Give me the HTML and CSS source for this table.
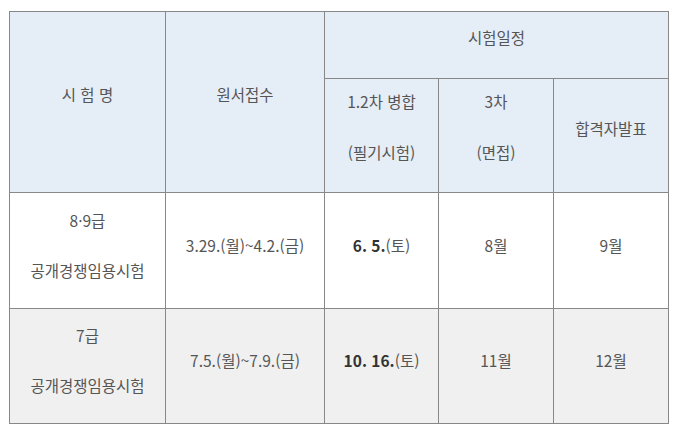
FILE: index.html
```html
<!DOCTYPE html>
<html lang="ko">
<head>
<meta charset="utf-8">
<link rel="stylesheet" href="styles.css">
</head>
<body>
<table class="sched">
  <colgroup>
    <col class="c1"><col class="c2"><col class="c3"><col class="c4"><col class="c5">
  </colgroup>
  <tr class="h1">
    <th rowspan="2" class="one">시 험 명</th>
    <th rowspan="2" class="one">원서접수</th>
    <th colspan="3" class="one">시험일정</th>
  </tr>
  <tr class="h2">
    <th class="two"><p>1.2차 병합</p><p>(필기시험)</p></th>
    <th class="two"><p>3차</p><p>(면접)</p></th>
    <th class="one">합격자발표</th>
  </tr>
  <tr class="r1">
    <td class="two"><p>8·9급</p><p>공개경쟁임용시험</p></td>
    <td class="one">3.29.(월)~4.2.(금)</td>
    <td class="one"><b>6. 5.</b>(토)</td>
    <td class="one">8월</td>
    <td class="one">9월</td>
  </tr>
  <tr class="r2">
    <td class="two"><p>7급</p><p>공개경쟁임용시험</p></td>
    <td class="one">7.5.(월)~7.9.(금)</td>
    <td class="one"><b>10. 16.</b>(토)</td>
    <td class="one">11월</td>
    <td class="one">12월</td>
  </tr>
</table>
</body>
</html>
```
FILE: styles.css
```css
html, body {
  margin: 0;
  padding: 0;
  background: #ffffff;
}
body {
  padding: 11px 0 0 9px;
  font-family: "Noto Sans CJK KR", "Noto Sans", sans-serif;
  font-size: 15.5px;
  color: #555555;
}
.sched {
  border-collapse: collapse;
  table-layout: fixed;
  width: 660px;
}
.c1 { width: 156px; }
.c2 { width: 159px; }
.c3 { width: 114px; }
.c4 { width: 115px; }
.c5 { width: 115px; }
.sched th,
.sched td {
  border: 1px solid #888888;
  padding: 0 0 12px 0;
  text-align: center;
  vertical-align: middle;
  font-weight: normal;
  line-height: 20px;
}
.sched th {
  background: #e5edf7;
}
.sched th.one { padding-bottom: 16px; }
.h1 { height: 67px; }
.h2 { height: 114px; }
.r1 { height: 116px; }
.r2 { height: 115px; }
.r2 td { background: #f0f0f0; }
.sched p {
  margin: 0;
  line-height: 50px;
}
.sched th.two { padding-bottom: 18px; }
.sched th.two p { line-height: 30px; }
.sched th.two p + p { margin-top: 21px; }
.sched b {
  font-weight: bold;
  color: #333333;
}
```
